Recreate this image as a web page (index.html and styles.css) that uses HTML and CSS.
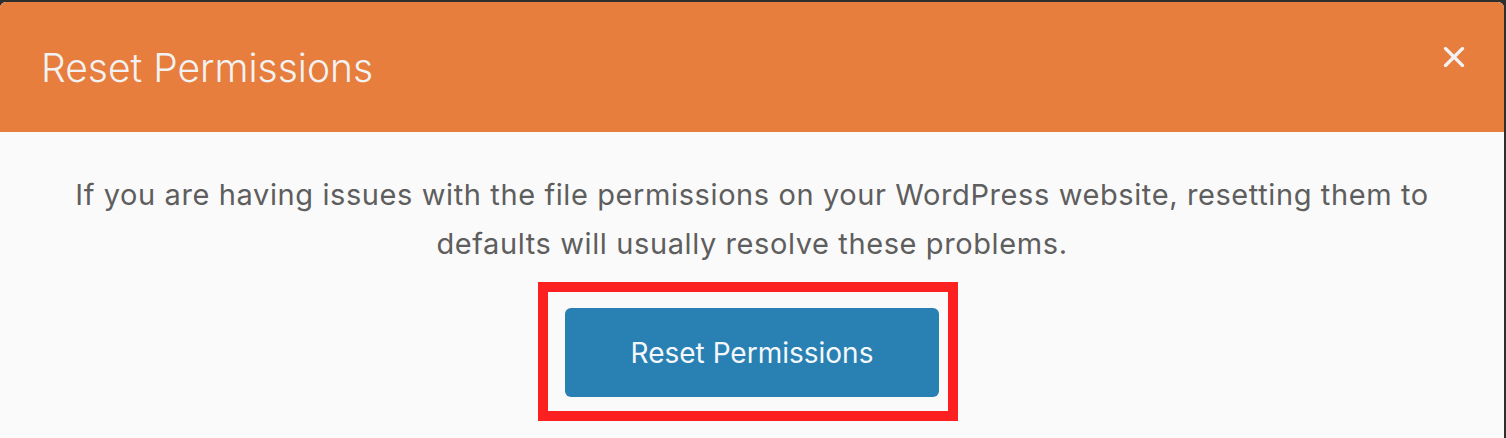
FILE: index.html
```html
<!DOCTYPE html>
<html lang="en">
<head>
    <meta charset="UTF-8">
    <meta name="viewport" content="width=device-width, initial-scale=1.0">
    <title>Reset Permissions</title>
    <link rel="stylesheet" href="styles.css">
</head>
<body>
<div class="modal">
    <div class="modal-header">
        <h2>Reset Permissions</h2>
        <span class="modal-close">
            <svg xmlns="http://www.w3.org/2000/svg" width="22" height="20" viewBox="0 0 22 20" fill="none" stroke="currentColor" stroke-width="3.2" stroke-linecap="round">
                <line x1="2.5" y1="1.5" x2="19.5" y2="18.5"></line>
                <line x1="19.5" y1="1.5" x2="2.5" y2="18.5"></line>
            </svg>
        </span>
    </div>
    <div class="modal-body">
        <p>If you are having issues with the file permissions on your WordPress website, resetting them to defaults will usually resolve these problems.</p>
        <div class="highlight">
            <button type="button">Reset Permissions</button>
        </div>
    </div>
</div>
</body>
</html>
```

FILE: styles.css
```css
:root {
    --header-color: #e87e3e;
    --body-bg: #fafafa;
    --text-color: #5e5e5e;
    --button-color: #2980b2;
    --mark-color: #fc2020;
}

* {
    box-sizing: border-box;
    margin: 0;
    padding: 0;
}

body {
    font-family: Inter, 'Noto Sans', sans-serif;
    background-color: #2e2e2e;
    height: 100vh;
    overflow: hidden;
}

.modal {
    margin-top: 2px;
    width: 1504px;
    height: 436px;
    background-color: var(--body-bg);
    border-radius: 6px 6px 0 0;
    overflow: hidden;
}

.modal-header {
    background-color: var(--header-color);
    height: 130px;
    display: flex;
    align-items: center;
    justify-content: space-between;
    padding: 0 39px 0 41px;
}

.modal-header h2 {
    color: #f2f2f2;
    font-size: 39px;
    font-weight: 300;
}

.modal-close {
    color: #f2f2f2;
    display: flex;
    margin-top: -20px;
    cursor: pointer;
}

.modal-body {
    display: flex;
    flex-direction: column;
    align-items: center;
    padding: 38px 60px 0;
}

.modal-body p {
    color: var(--text-color);
    font-size: 29px;
    letter-spacing: 0.6px;
    line-height: 49px;
    text-align: center;
    max-width: 1380px;
}

.highlight {
    margin: 14px 8px 0 0;
    border: 10px solid var(--mark-color);
    padding: 16px 9px 14px 17px;
}

button {
    display: block;
    width: 374px;
    height: 89px;
    background-color: var(--button-color);
    color: #f4f8fb;
    border: none;
    border-radius: 6px;
    font-family: inherit;
    font-size: 28px;
    cursor: pointer;
}
```
